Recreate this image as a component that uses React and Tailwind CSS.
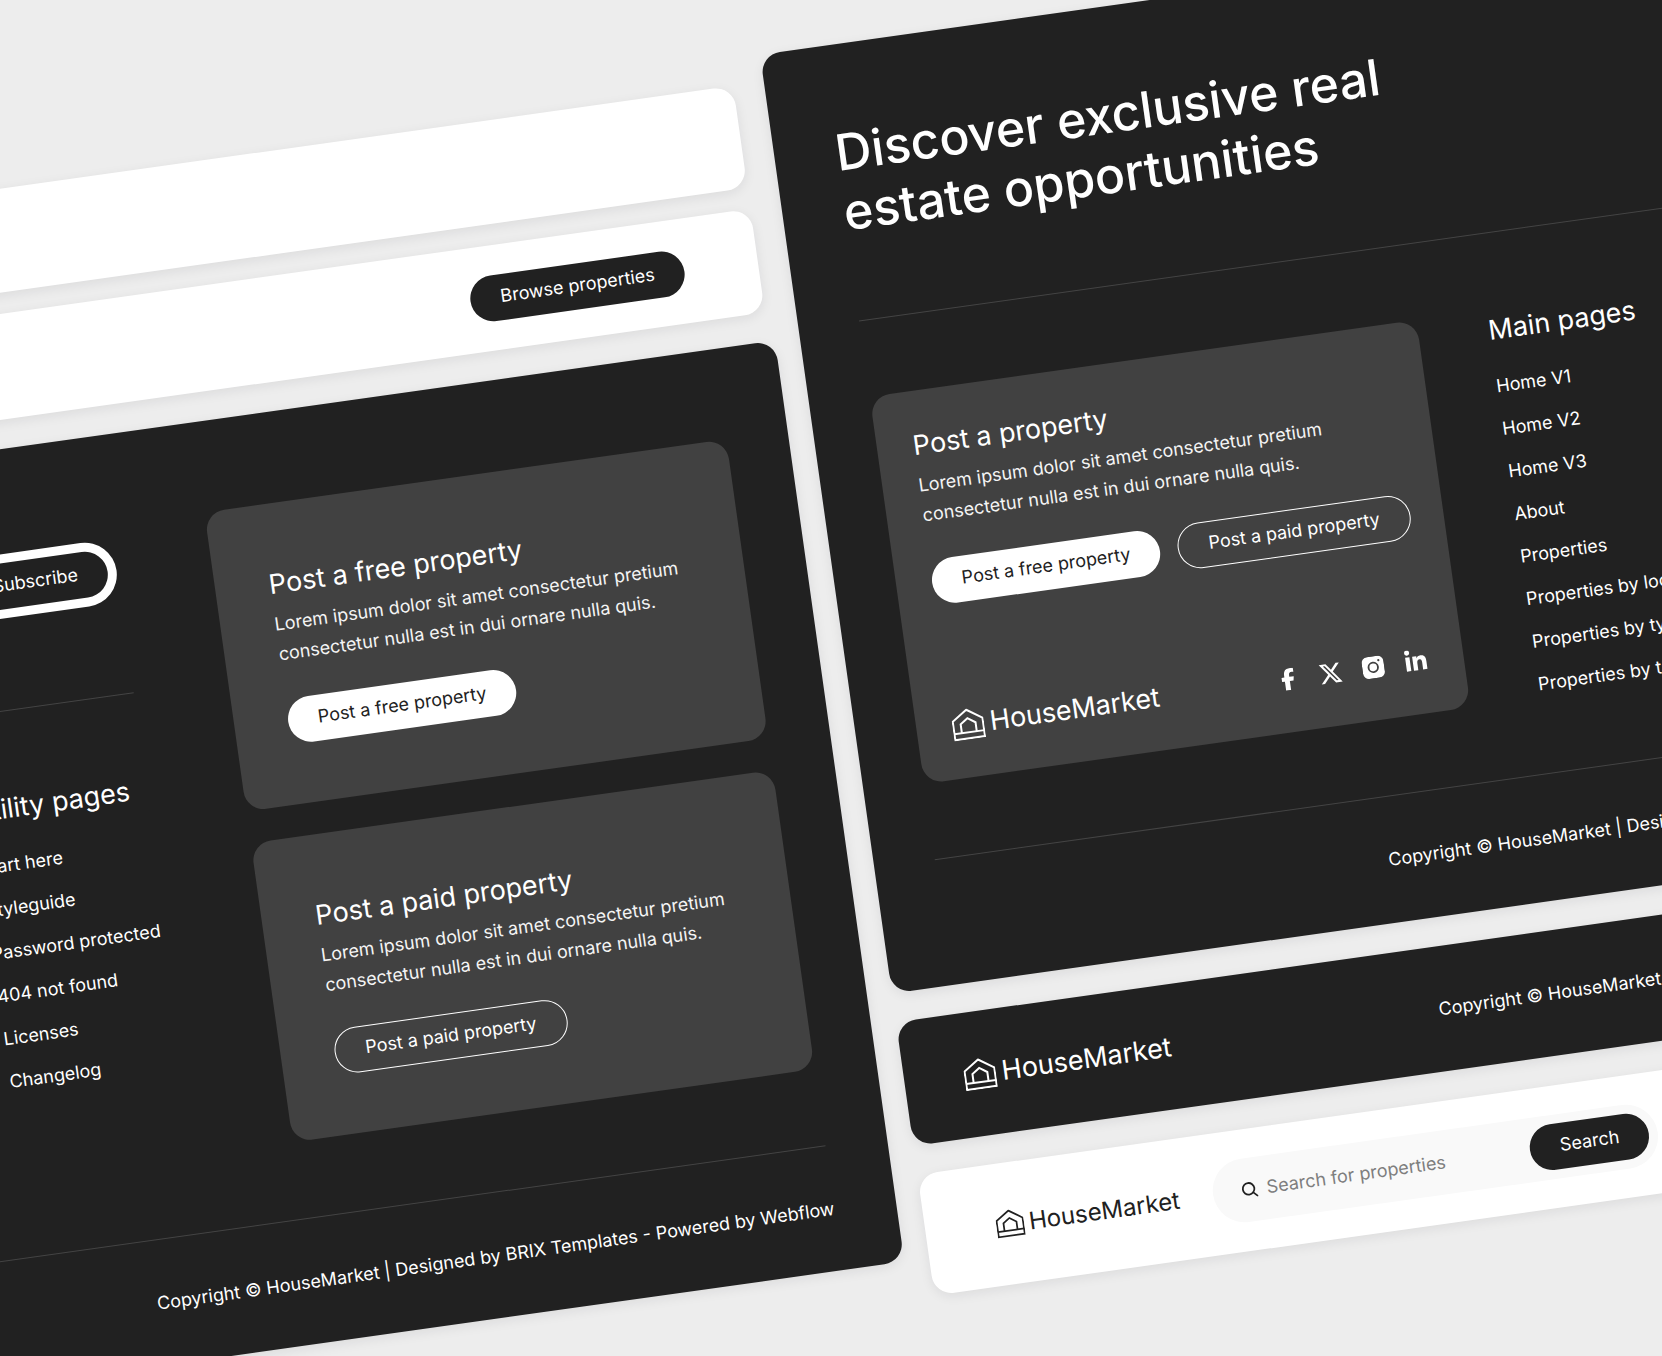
import { FaFacebookF, FaLinkedinIn, FaXTwitter } from 'react-icons/fa6'
import { clsx } from 'clsx'

const mainPages = [
  'Home V1',
  'Home V2',
  'Home V3',
  'About',
  'Properties',
  'Properties by location',
  'Properties by type',
  'Properties by tag',
]

const utilityPages = [
  'Start here',
  'Styleguide',
  'Password protected',
  '404 not found',
  'Licenses',
  'Changelog',
]

const HouseIcon = ({ className }) => (
  <svg className={className} viewBox="0 0 32 31" fill="none" stroke="currentColor" strokeWidth="2" aria-hidden="true">
    <path d="M1 30V11.4L16 1.3l15 10.1V30z" />
    <path d="M1 24h30" />
    <path d="M8.5 24v-9L16 9.8l7.5 5.2v9" />
  </svg>
)

const InstagramIcon = () => (
  <svg className="size-[22px]" viewBox="0 0 22 22" fill="currentColor" aria-hidden="true">
    <path
      fillRule="evenodd"
      d="M6 0h10a6 6 0 0 1 6 6v10a6 6 0 0 1-6 6H6a6 6 0 0 1-6-6V6a6 6 0 0 1 6-6zm5 5.4a5.6 5.6 0 1 0 0 11.2 5.6 5.6 0 0 0 0-11.2zm6-1.9a1.1 1.1 0 1 0 0 2.2 1.1 1.1 0 0 0 0-2.2z"
    />
    <path d="M11 7.2a3.8 3.8 0 1 1 0 7.6 3.8 3.8 0 0 1 0-7.6z" />
  </svg>
)

const SearchIcon = () => (
  <svg className="size-4 shrink-0 text-[#212121]" viewBox="0 0 16 16" fill="none" stroke="currentColor" strokeWidth="1.8" strokeLinecap="round" aria-hidden="true">
    <circle cx="7" cy="7" r="5.8" />
    <path d="M11.2 11.2 15 15" />
  </svg>
)

const Logo = ({ small }) => (
  <a href="#" className={clsx('flex items-center', small ? 'gap-[5px]' : 'gap-1.5')}>
    <HouseIcon className={small ? 'w-7' : 'w-8'} />
    <span className={small ? 'text-2xl/[31px]' : 'text-[27px] leading-[31px]'}>HouseMarket</span>
  </a>
)

const Button = ({ variant, children }) => (
  <button
    className={clsx(
      'h-[46px] shrink-0 rounded-full px-[30px] pb-0.5 text-lg whitespace-nowrap',
      variant === 'light' && 'bg-white text-[#212121]',
      variant === 'dark' && 'bg-[#212121] text-white',
      variant === 'outline' && 'border border-white text-white'
    )}
  >
    {children}
  </button>
)

const Copyright = () => (
  <p className="text-right text-lg leading-[27px] whitespace-nowrap">
    Copyright © HouseMarket | Designed by BRIX Templates - Powered by Webflow
  </p>
)

const PageLinks = ({ title, links }) => (
  <nav className="w-[177px] whitespace-nowrap">
    <h3 className="mb-[21px] text-[27px] leading-[42px]">{title}</h3>
    <ul className="flex flex-col gap-4">
      {links.map(link => (
        <li key={link} className="text-lg leading-[27px]">
          <a href="#">{link}</a>
        </li>
      ))}
    </ul>
  </nav>
)

const CardText = ({ title }) => (
  <>
    <h3 className="text-[27px] leading-[42px]">{title}</h3>
    <p className="mt-1 mb-[30px] text-lg leading-[30px] text-[#f4f4f4]">
      Lorem ipsum dolor sit amet consectetur pretium
      <br />
      consectetur nulla est in dui ornare nulla quis.
    </p>
  </>
)

const LeftFooter = () => (
  <footer className="mt-[29px] rounded-[20px] bg-[#212121] px-[62px] pt-[91px] pb-[49px] text-white shadow-[0_3px_12px_rgba(20,20,43,0.08)]">
    <div className="flex gap-[95px]">
      <div className="flex-1">
        <form className="mt-[13px] flex rounded-full bg-white p-[9px]" onSubmit={e => e.preventDefault()}>
          <input type="email" aria-label="Email" className="min-w-0 flex-1 px-6 text-lg text-[#212121] outline-none" />
          <Button variant="dark">Subscribe</Button>
        </form>
        <hr className="mt-[91px] mb-[76px] border-[#444444]" />
        <div className="flex justify-end">
          <PageLinks title="Utility pages" links={utilityPages} />
        </div>
      </div>
      <div className="flex w-[527px] flex-col gap-8">
        <div className="rounded-[20px] bg-[#414141] px-[54px] py-[60px]">
          <CardText title="Post a free property" />
          <Button variant="light">Post a free property</Button>
        </div>
        <div className="rounded-[20px] bg-[#414141] px-[54px] py-[60px]">
          <CardText title="Post a paid property" />
          <Button variant="outline">Post a paid property</Button>
        </div>
      </div>
    </div>
    <hr className="mt-[77px] mb-[49px] border-[#444444]" />
    <Copyright />
  </footer>
)

const RightFooter = () => (
  <footer className="rounded-[20px] bg-[#212121] px-[61px] pt-[78px] pb-[50px] text-white shadow-[0_3px_12px_rgba(20,20,43,0.08)]">
    <h2 className="text-[50px] leading-[60px] font-medium">
      Discover exclusive real
      <br />
      estate opportunities
    </h2>
    <hr className="mt-[79px] mb-[76px] border-[#444444]" />
    <div className="flex items-start gap-[70px]">
      <div className="w-[552px] rounded-[20px] bg-[#414141] px-9 pt-[34px] pb-[38px]">
        <CardText title="Post a property" />
        <div className="flex gap-[18px]">
          <Button variant="light">Post a free property</Button>
          <Button variant="outline">Post a paid property</Button>
        </div>
        <div className="mt-[106px] flex items-center justify-between">
          <Logo />
          <div className="flex items-center gap-5">
            <a href="#" aria-label="Facebook"><FaFacebookF className="size-[22px]" /></a>
            <a href="#" aria-label="X"><FaXTwitter className="size-6" /></a>
            <a href="#" aria-label="Instagram"><InstagramIcon /></a>
            <a href="#" aria-label="LinkedIn"><FaLinkedinIn className="size-6" /></a>
          </div>
        </div>
      </div>
      <PageLinks title="Main pages" links={mainPages} />
    </div>
    <hr className="mt-[76px] mb-[49px] border-[#444444]" />
    <Copyright />
  </footer>
)

const App = () => {
  return (
    <main className="h-screen overflow-hidden bg-[#ededed] font-['Inter',sans-serif]">
      {/* tilted board, wider than the window on both sides */}
      <div className="-ml-[535px] flex w-max origin-[535px_0px] -rotate-8 items-start gap-[25px]">
        <div className="w-[1255px] pt-[187px]">
          <header className="mr-1.5 h-[103px] rounded-[20px] bg-white shadow-[0_3px_12px_rgba(20,20,43,0.08)]" />
          <header className="mt-[21px] mr-1.5 flex h-[105px] items-center justify-end rounded-[20px] bg-white px-[74px] shadow-[0_3px_12px_rgba(20,20,43,0.08)]">
            <Button variant="dark">Browse properties</Button>
          </header>
          <LeftFooter />
        </div>

        <div className="w-[1255px] pt-40">
          <RightFooter />
          <footer className="mt-[29px] flex h-[125px] items-center justify-between rounded-[20px] bg-[#212121] pr-8 pl-[60px] text-white shadow-[0_3px_12px_rgba(20,20,43,0.08)]">
            <Logo />
            <Copyright />
          </footer>
          <header className="mt-[29px] flex h-[122px] items-center gap-[34px] rounded-[20px] bg-white px-[71px] text-[#212121] shadow-[0_3px_12px_rgba(20,20,43,0.08)]">
            <Logo small />
            <form className="flex w-[449px] items-center rounded-full bg-[#f9f9f9] p-[9px] pl-[29px]" onSubmit={e => e.preventDefault()}>
              <SearchIcon />
              <input
                type="text"
                aria-label="Search for properties"
                placeholder="Search for properties"
                className="mx-[9px] min-w-0 flex-1 text-lg outline-none placeholder:text-[#7e7e7e]"
              />
              <Button variant="dark">Search</Button>
            </form>
          </header>
        </div>
      </div>
    </main>
  )
}

export default App
